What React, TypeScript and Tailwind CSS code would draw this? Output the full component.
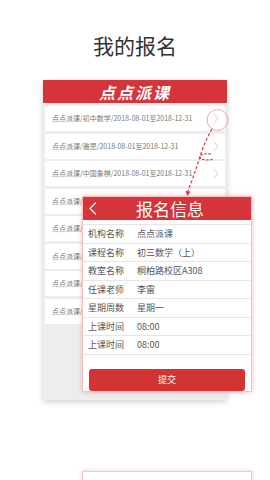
import React from 'react';

const LIST = [
  '点点派课/初中数学/2018-08-01至2018-12-31',
  '点点派课/雅思/2018-08-01至2018-12-31',
  '点点派课/中国象棋/2018-08-01至2018-12-31',
  '点点派课/初中数学/2018-08-01至2018-12-31',
  '点点派课/初中数学/2018-08-01至2018-12-31',
  '点点派课/初中数学/2018-08-01至2018-12-31',
  '点点派课/初中数学/2018-08-01至2018-12-31',
  '点点派课/初中数学/2018-08-01至2018-12-31',
];

const INFO = [
  ['机构名称', '点点派课'],
  ['课程名称', '初三数学（上）'],
  ['教室名称', '桐柏路校区A308'],
  ['任课老师', '李雷'],
  ['星期周数', '星期一'],
  ['上课时间', '08:00'],
  ['上课时间', '08:00'],
];

const Chevron = () => (
  <svg width="6" height="11" viewBox="0 0 6 11" className="shrink-0">
    <polyline points="0.5,0.5 5,5.5 0.5,10.5" fill="none" stroke="#cfcfcf" strokeWidth="1" />
  </svg>
);

const App = () => {
  return (
    <div className="relative w-[270px] h-[480px] overflow-hidden bg-white font-['Noto_Sans_CJK_SC','Noto_Sans',sans-serif]">
      <h1 className="pt-[33px] text-center text-[21px] leading-[24px] text-[#333]">我的报名</h1>

      {/* back phone list */}
      <div className="mt-[23px] ml-[43px] w-[184px] h-[320px] bg-[#ededed] shadow-[0_2px_6px_rgba(0,0,0,0.18)]">
        <div className="h-[23px] bg-[#d5343a] flex items-center justify-center">
          <span className="text-white text-[16px] leading-none font-bold italic tracking-[2px]">点点派课</span>
        </div>
        <div className="flex flex-col gap-[2.5px] px-[2px] pt-[3px]">
          {LIST.map((item, i) => (
            <div key={i} className="h-[25px] bg-white flex items-center justify-between pl-[7px] pr-[6px]">
              <span className="text-[7px] leading-none text-[#777] whitespace-nowrap">{item}</span>
              <Chevron />
            </div>
          ))}
        </div>
      </div>

      {/* detail card */}
      <div className="absolute left-[82px] top-[196px] w-[170px] h-[196px] bg-white border border-[#f3c0c0] shadow-[0_0_5px_rgba(220,70,70,0.35)]">
        <div className="h-[23px] bg-[#d5343a] relative flex items-center justify-center">
          <svg width="8" height="13" viewBox="0 0 8 13" className="absolute left-[6px] top-[5px]">
            <polyline points="7,0.5 1,6.5 7,12.5" fill="none" stroke="#fff" strokeWidth="1.1" />
          </svg>
          <span className="text-white text-[17px] leading-none pl-[6px]">报名信息</span>
        </div>
        <div className="mt-[4px] border-t border-[#e6e6e6]">
          {INFO.map(([k, v], i) => (
            <div key={i} className="h-[18.5px] border-b border-[#e6e6e6] flex items-center pl-[5px] text-[9px] leading-none text-[#555]">
              <span className="w-[49px]">{k}</span>
              <span>{v}</span>
            </div>
          ))}
        </div>
        <div className="mt-[14px] mx-[6px] h-[22px] rounded-[3px] bg-[#d23434] flex items-center justify-center">
          <span className="text-white text-[9px] leading-none">提交</span>
        </div>
      </div>

      {/* next card peeking */}
      <div className="absolute left-[82px] top-[471px] w-[170px] h-[20px] bg-white border border-[#f6caca] shadow-[0_0_4px_rgba(220,70,70,0.3)]" />

      {/* annotation */}
      <svg width="270" height="480" viewBox="0 0 270 480" className="absolute inset-0 pointer-events-none">
        <circle cx="217.5" cy="120" r="10.5" fill="none" stroke="#f0a5a5" strokeWidth="1" />
        <path d="M212 129 Q203 145 199 160 Q193 178 188 191" fill="none" stroke="#d5343a" strokeWidth="1.2" strokeDasharray="3 2" />
        <path d="M211 154 Q199 153 200 157.5 Q201 161 213 159.5" fill="none" stroke="#d5343a" strokeWidth="1.1" strokeDasharray="2.5 1.5" />
        <polygon points="185.5,191 190.5,191.5 187.5,196" fill="#d5343a" />
      </svg>
    </div>
  );
};

export default App;
